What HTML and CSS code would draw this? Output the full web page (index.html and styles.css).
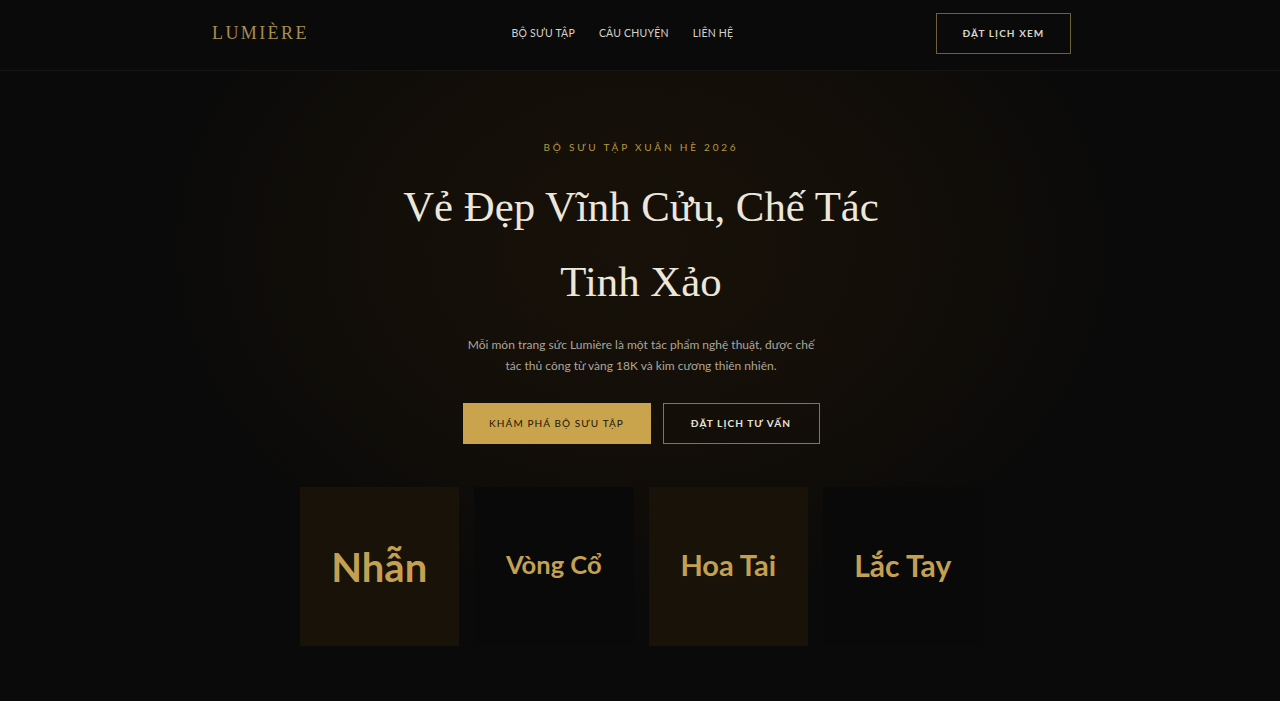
FILE: index.html
```html
<!DOCTYPE html>
<html lang="vi">
<head>
<meta charset="utf-8">
<title>Lumière</title>
<link rel="stylesheet" href="styles.css">
</head>
<body>
<header class="nav">
  <a class="logo" href="#">LUMIÈRE</a>
  <nav class="links">
    <a href="#">BỘ SƯU TẬP</a>
    <a href="#">CÂU CHUYỆN</a>
    <a href="#">LIÊN HỆ</a>
  </nav>
  <a class="btn btn-nav" href="#">ĐẶT LỊCH XEM</a>
</header>
<main class="hero">
  <p class="eyebrow">BỘ SƯU TẬP XUÂN HÈ 2026</p>
  <h1 class="title">Vẻ Đẹp Vĩnh Cửu, Chế Tác<br>Tinh Xảo</h1>
  <p class="lead">Mỗi món trang sức Lumière là một tác phẩm nghệ thuật, được chế<br>tác thủ công từ vàng 18K và kim cương thiên nhiên.</p>
  <div class="actions">
    <a class="btn btn-gold" href="#">KHÁM PHÁ BỘ SƯU TẬP</a>
    <a class="btn btn-line" href="#">ĐẶT LỊCH TƯ VẤN</a>
  </div>
  <div class="cards">
    <div class="card warm size-nhan">Nhẫn</div>
    <div class="card size-vong">Vòng Cổ</div>
    <div class="card warm size-hoa">Hoa Tai</div>
    <div class="card size-lac">Lắc Tay</div>
  </div>
</main>
</body>
</html>
```
FILE: styles.css
```css
* { box-sizing: border-box; }
html, body { margin: 0; height: 100%; overflow: hidden; }
body { background: #0a0a0a; font-family: "Lato", "Noto Sans", sans-serif; color: #f5f0e8; }
a { text-decoration: none; color: inherit; }
.nav { height: 71px; padding: 0 209px 4px 212px; display: flex; align-items: center; justify-content: space-between; border-bottom: 1px solid #161514; }
.logo { font-family: "Liberation Serif", serif; font-size: 18px; letter-spacing: 2.4px; color: #a88d4e; }
.links { display: flex; gap: 24px; font-size: 10.5px; letter-spacing: 0.2px; color: #d6d2ca; }
.btn { display: flex; align-items: center; justify-content: center; height: 41px; font-size: 10px; font-weight: 700; letter-spacing: 1.1px; }
.btn-nav { width: 135px; border: 1px solid #6d5f3a; color: #d9d5cc; }
.hero { display: flex; flex-direction: column; align-items: center; width: 1282px; height: 630px; padding-top: 69px; background: radial-gradient(ellipse 480px 360px at 50% 28%, #171108 0%, #130e08 55%, #0a0a0a 100%); }
.eyebrow { margin: 0; font-size: 10px; line-height: 14px; letter-spacing: 2.8px; color: #b8973f; }
.title { margin: 15px 0 0; font-family: "Liberation Serif", serif; font-size: 42.8px; font-weight: 400; line-height: 75px; text-align: center; color: #ece7dc; }
.lead { margin: 15px 0 0; font-size: 12px; line-height: 21px; text-align: center; color: #aca699; }
.actions { display: flex; gap: 12px; margin-top: 27px; }
.btn-gold { width: 188px; padding-bottom: 2px; background: #c9a44c; color: #1a1409; font-weight: 400; }
.btn-line { width: 157px; padding-bottom: 2px; border: 1px solid #8a7642; color: #e8e4da; }
.cards { display: flex; gap: 15px; margin-top: 43px; }
.card { display: flex; align-items: center; justify-content: center; width: 159.5px; height: 159px; font-weight: 700; color: #c4a052; background: #09090a; }
.warm { background: #191208; }
.size-nhan { font-size: 40px; }
.size-vong { font-size: 25.5px; padding-bottom: 6px; }
.size-hoa { font-size: 29px; padding-bottom: 4px; }
.size-lac { font-size: 30px; padding-bottom: 4px; }
```
